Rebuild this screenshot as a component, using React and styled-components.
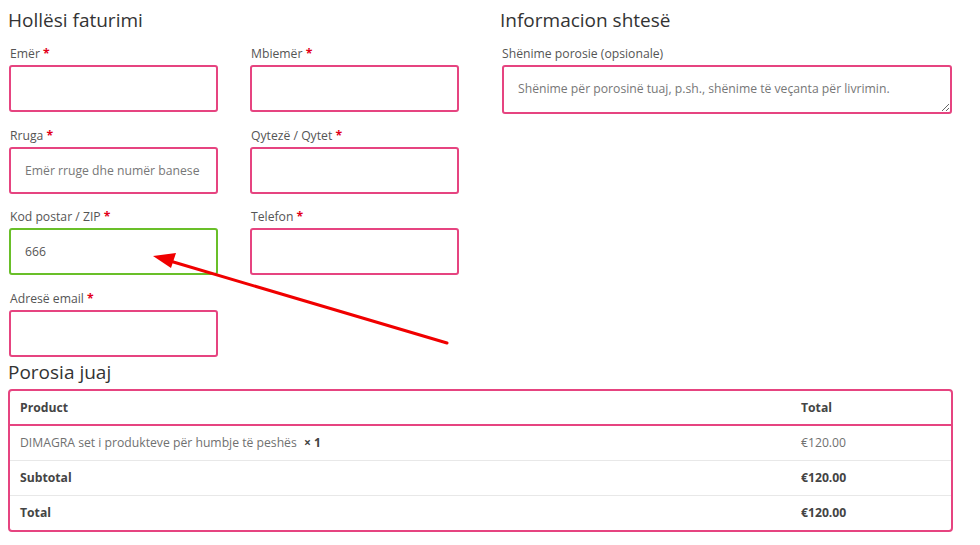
import React from 'react';
import styled, { createGlobalStyle } from 'styled-components';

const GlobalStyle = createGlobalStyle`
  html, body {
    margin: 0;
    padding: 0;
    background: #fff;
  }
  body {
    font-family: "Open Sans", "Liberation Sans", sans-serif;
    color: #333;
  }
`;

const Page = styled.div`
  position: relative;
  width: 980px;
  height: 545px;
  padding: 6px 0 0 8px;
  box-sizing: border-box;
  overflow: hidden;
`;

const Columns = styled.div`
  display: flex;
  gap: 40px;
`;

const Column = styled.div`
  width: 452px;
`;

const Heading = styled.h3`
  margin: 0 0 11px;
  font-size: 19px;
  font-weight: 400;
  line-height: 28px;
  color: #333;
`;

const FieldGrid = styled.div`
  display: grid;
  grid-template-columns: 209px 209px;
  column-gap: 32px;
  row-gap: 14.6px;
  padding-left: 1px;
`;

const Field = styled.div`
  display: flex;
  flex-direction: column;
`;

const Label = styled.label`
  font-size: 12.2px;
  line-height: 18px;
  color: #555;
  margin: 0 0 2px ${p => p.$indent || 1}px;
`;

const Req = styled.span`
  color: #e2001a;
  font-weight: 700;
`;

const Input = styled.input`
  box-sizing: border-box;
  width: 100%;
  height: 47px;
  border: 2px solid ${p => (p.$valid ? '#69bf29' : '#e64480')};
  border-radius: 3px;
  padding: 0 14px;
  font-family: inherit;
  font-size: 12.2px;
  color: #555;
  background: #fff;
  outline: none;

  &::placeholder {
    color: #777;
  }
`;

const Notes = styled.textarea`
  box-sizing: border-box;
  width: 450px;
  height: 49px;
  margin-left: 2px;
  border: 2px solid #e64480;
  border-radius: 3px;
  padding: 13px 14px;
  font-family: inherit;
  font-size: 12.2px;
  line-height: 18px;
  color: #555;
  outline: none;
  resize: vertical;

  &::placeholder {
    color: #777;
  }
`;

const OrderHeading = styled(Heading)`
  margin: 1px 0 3px;
`;

const Table = styled.table`
  width: 945px;
  border-collapse: separate;
  border-spacing: 0;
  border: 2px solid #e64480;
  border-radius: 4px;
  font-size: 12.2px;
  color: #666;
`;

const Th = styled.th`
  text-align: left;
  font-weight: 700;
  color: #444;
  height: 33px;
  padding: 0 10px;
  border-bottom: 2px solid #e64480;
  width: ${p => p.$w || 'auto'};
`;

const Td = styled.td`
  height: 34px;
  padding: 0 10px;
  font-weight: ${p => (p.$bold ? 700 : 400)};
  color: ${p => (p.$bold ? '#444' : '#707070')};
  border-top: ${p => (p.$line ? '1px solid #e8e8e8' : 'none')};
`;

const Qty = styled.strong`
  color: #444;
  margin-left: 4px;
`;

const Arrow = styled.svg`
  position: absolute;
  left: 0;
  top: 0;
  pointer-events: none;
`;

export default function App() {
  return (
    <Page>
      <GlobalStyle />
      <Columns>
        <Column>
          <Heading>Hollësi faturimi</Heading>
          <FieldGrid>
            <Field>
              <Label>Emër <Req>*</Req></Label>
              <Input />
            </Field>
            <Field>
              <Label>Mbiemër <Req>*</Req></Label>
              <Input />
            </Field>
            <Field>
              <Label>Rruga <Req>*</Req></Label>
              <Input placeholder="Emër rruge dhe numër banese" />
            </Field>
            <Field>
              <Label>Qytezë / Qytet <Req>*</Req></Label>
              <Input />
            </Field>
            <Field>
              <Label>Kod postar / ZIP <Req>*</Req></Label>
              <Input $valid defaultValue="666" />
            </Field>
            <Field>
              <Label>Telefon <Req>*</Req></Label>
              <Input />
            </Field>
            <Field>
              <Label>Adresë email <Req>*</Req></Label>
              <Input />
            </Field>
          </FieldGrid>
        </Column>
        <Column>
          <Heading>Informacion shtesë</Heading>
          <Field>
            <Label $indent={2}>Shënime porosie (opsionale)</Label>
            <Notes placeholder="Shënime për porosinë tuaj, p.sh., shënime të veçanta për livrimin." />
          </Field>
        </Column>
      </Columns>

      <OrderHeading>Porosia juaj</OrderHeading>
      <Table>
        <thead>
          <tr>
            <Th>Product</Th>
            <Th $w="140px">Total</Th>
          </tr>
        </thead>
        <tbody>
          <tr>
            <Td>DIMAGRA set i produkteve për humbje të peshës <Qty>× 1</Qty></Td>
            <Td>€120.00</Td>
          </tr>
          <tr>
            <Td $bold $line>Subtotal</Td>
            <Td $bold $line>€120.00</Td>
          </tr>
          <tr>
            <Td $bold $line>Total</Td>
            <Td $bold $line>€120.00</Td>
          </tr>
        </tbody>
      </Table>

      <Arrow width="980" height="545" viewBox="0 0 980 545">
        <line x1="447" y1="343" x2="170" y2="261" stroke="#f00000" strokeWidth="3" strokeLinecap="round" />
        <polygon points="153,256 176,253 171,268" fill="#f00000" />
      </Arrow>
    </Page>
  );
}
